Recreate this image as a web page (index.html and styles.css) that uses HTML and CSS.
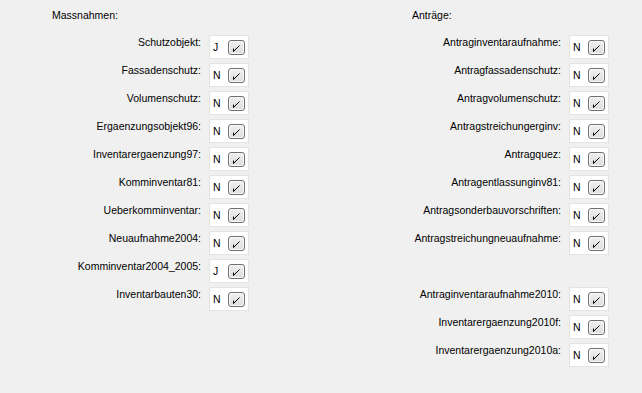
FILE: index.html
```html
<!DOCTYPE html>
<html>
<head>
    <title>Massnahmen / Anträge</title>
    <link rel="stylesheet" href="styles.css">
</head>
<body>
<div id="mainForm">
    <!-- Massnahmen -->
    <div class="section">
        <h2>Massnahmen:</h2>
        <div class="rows">
            <label>Schutzobjekt:</label>
            <div class="field"><span>J</span><button type="button"><svg width="15" height="13" viewBox="0 0 15 13"><path d="M4.5 7.5 L4.5 10.5 L10.5 4.5" fill="none" stroke="#000" stroke-width="1"/></svg></button></div>

            <label>Fassadenschutz:</label>
            <div class="field"><span>N</span><button type="button"><svg width="15" height="13" viewBox="0 0 15 13"><path d="M4.5 7.5 L4.5 10.5 L10.5 4.5" fill="none" stroke="#000" stroke-width="1"/></svg></button></div>

            <label>Volumenschutz:</label>
            <div class="field"><span>N</span><button type="button"><svg width="15" height="13" viewBox="0 0 15 13"><path d="M4.5 7.5 L4.5 10.5 L10.5 4.5" fill="none" stroke="#000" stroke-width="1"/></svg></button></div>

            <label>Ergaenzungsobjekt96:</label>
            <div class="field"><span>N</span><button type="button"><svg width="15" height="13" viewBox="0 0 15 13"><path d="M4.5 7.5 L4.5 10.5 L10.5 4.5" fill="none" stroke="#000" stroke-width="1"/></svg></button></div>

            <label>Inventarergaenzung97:</label>
            <div class="field"><span>N</span><button type="button"><svg width="15" height="13" viewBox="0 0 15 13"><path d="M4.5 7.5 L4.5 10.5 L10.5 4.5" fill="none" stroke="#000" stroke-width="1"/></svg></button></div>

            <label>Komminventar81:</label>
            <div class="field"><span>N</span><button type="button"><svg width="15" height="13" viewBox="0 0 15 13"><path d="M4.5 7.5 L4.5 10.5 L10.5 4.5" fill="none" stroke="#000" stroke-width="1"/></svg></button></div>

            <label>Ueberkomminventar:</label>
            <div class="field"><span>N</span><button type="button"><svg width="15" height="13" viewBox="0 0 15 13"><path d="M4.5 7.5 L4.5 10.5 L10.5 4.5" fill="none" stroke="#000" stroke-width="1"/></svg></button></div>

            <label>Neuaufnahme2004:</label>
            <div class="field"><span>N</span><button type="button"><svg width="15" height="13" viewBox="0 0 15 13"><path d="M4.5 7.5 L4.5 10.5 L10.5 4.5" fill="none" stroke="#000" stroke-width="1"/></svg></button></div>

            <label>Komminventar2004_2005:</label>
            <div class="field"><span>J</span><button type="button"><svg width="15" height="13" viewBox="0 0 15 13"><path d="M4.5 7.5 L4.5 10.5 L10.5 4.5" fill="none" stroke="#000" stroke-width="1"/></svg></button></div>

            <label>Inventarbauten30:</label>
            <div class="field"><span>N</span><button type="button"><svg width="15" height="13" viewBox="0 0 15 13"><path d="M4.5 7.5 L4.5 10.5 L10.5 4.5" fill="none" stroke="#000" stroke-width="1"/></svg></button></div>
        </div>
    </div>

    <!-- Anträge -->
    <div class="section">
        <h2>Anträge:</h2>
        <div class="rows">
            <label>Antraginventaraufnahme:</label>
            <div class="field"><span>N</span><button type="button"><svg width="15" height="13" viewBox="0 0 15 13"><path d="M4.5 7.5 L4.5 10.5 L10.5 4.5" fill="none" stroke="#000" stroke-width="1"/></svg></button></div>

            <label>Antragfassadenschutz:</label>
            <div class="field"><span>N</span><button type="button"><svg width="15" height="13" viewBox="0 0 15 13"><path d="M4.5 7.5 L4.5 10.5 L10.5 4.5" fill="none" stroke="#000" stroke-width="1"/></svg></button></div>

            <label>Antragvolumenschutz:</label>
            <div class="field"><span>N</span><button type="button"><svg width="15" height="13" viewBox="0 0 15 13"><path d="M4.5 7.5 L4.5 10.5 L10.5 4.5" fill="none" stroke="#000" stroke-width="1"/></svg></button></div>

            <label>Antragstreichungerginv:</label>
            <div class="field"><span>N</span><button type="button"><svg width="15" height="13" viewBox="0 0 15 13"><path d="M4.5 7.5 L4.5 10.5 L10.5 4.5" fill="none" stroke="#000" stroke-width="1"/></svg></button></div>

            <label>Antragquez:</label>
            <div class="field"><span>N</span><button type="button"><svg width="15" height="13" viewBox="0 0 15 13"><path d="M4.5 7.5 L4.5 10.5 L10.5 4.5" fill="none" stroke="#000" stroke-width="1"/></svg></button></div>

            <label>Antragentlassunginv81:</label>
            <div class="field"><span>N</span><button type="button"><svg width="15" height="13" viewBox="0 0 15 13"><path d="M4.5 7.5 L4.5 10.5 L10.5 4.5" fill="none" stroke="#000" stroke-width="1"/></svg></button></div>

            <label>Antragsonderbauvorschriften:</label>
            <div class="field"><span>N</span><button type="button"><svg width="15" height="13" viewBox="0 0 15 13"><path d="M4.5 7.5 L4.5 10.5 L10.5 4.5" fill="none" stroke="#000" stroke-width="1"/></svg></button></div>

            <label>Antragstreichungneuaufnahme:</label>
            <div class="field"><span>N</span><button type="button"><svg width="15" height="13" viewBox="0 0 15 13"><path d="M4.5 7.5 L4.5 10.5 L10.5 4.5" fill="none" stroke="#000" stroke-width="1"/></svg></button></div>

            <div class="spacer"></div>

            <label>Antraginventaraufnahme2010:</label>
            <div class="field"><span>N</span><button type="button"><svg width="15" height="13" viewBox="0 0 15 13"><path d="M4.5 7.5 L4.5 10.5 L10.5 4.5" fill="none" stroke="#000" stroke-width="1"/></svg></button></div>

            <label>Inventarergaenzung2010f:</label>
            <div class="field"><span>N</span><button type="button"><svg width="15" height="13" viewBox="0 0 15 13"><path d="M4.5 7.5 L4.5 10.5 L10.5 4.5" fill="none" stroke="#000" stroke-width="1"/></svg></button></div>

            <label>Inventarergaenzung2010a:</label>
            <div class="field"><span>N</span><button type="button"><svg width="15" height="13" viewBox="0 0 15 13"><path d="M4.5 7.5 L4.5 10.5 L10.5 4.5" fill="none" stroke="#000" stroke-width="1"/></svg></button></div>
        </div>
    </div>
</div>
</body>
</html>
```

FILE: styles.css
```css
body {
    font-family: "Liberation Sans", Arial, sans-serif;
    font-size: 10.5px;
    line-height: 13px;
    color: #000;
    background-color: #f0f0f0;
    margin: 0;
    padding: 0;
}

#mainForm {
    display: flex;
    gap: 163px;
    padding: 9px 0 0 52px;
}

.section h2 {
    font-size: 10.5px;
    font-weight: normal;
    margin: 0 0 13px 0;
    line-height: 13px;
}

.rows {
    display: grid;
    grid-template-columns: 149px 40px;
    column-gap: 8px;
    row-gap: 4px;
}

.rows label {
    display: flex;
    justify-content: flex-end;
    white-space: nowrap;
    padding-top: 1px;
}

.field {
    box-sizing: border-box;
    height: 24px;
    display: flex;
    align-items: center;
    justify-content: space-between;
    padding: 0 3px 0 3px;
    background-color: #fff;
    border: 1px solid #e3e3e3;
}

.field span {
    padding-top: 1px;
}

.field button {
    box-sizing: border-box;
    width: 17px;
    height: 15px;
    padding: 0;
    margin: 0;
    display: flex;
    align-items: center;
    justify-content: center;
    border: 1px solid #707070;
    border-radius: 3px;
    background: linear-gradient(#f0f0f0, #dcdcdc);
    box-shadow: inset 0 0 0 1px #fafafa;
}

.field button svg {
    display: block;
}

.spacer {
    grid-column: 1 / 3;
    height: 24px;
}
```
